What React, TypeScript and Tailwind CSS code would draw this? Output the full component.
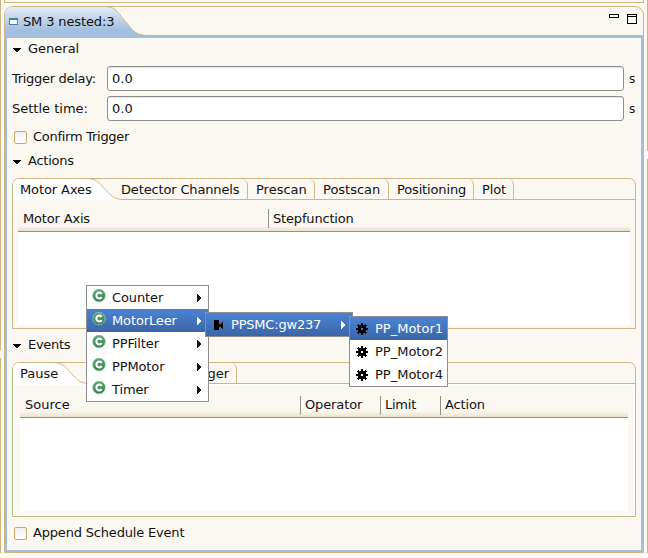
import React from "react";

const cream = "bg-[#fbf8f1]";

function Twistie({ label, className }: { label: string; className: string }) {
  return (
    <div className={`flex h-[20px] items-center pl-[6px] ${className}`}>
      <svg width="8" height="5" className="mt-[3px] mr-[7px]" shapeRendering="crispEdges">
        <path d="M0 0h8v1h-1v1h-1v1h-1v1h-2v-1h-1v-1h-1v-1h-1z" fill="#000" />
      </svg>
      <span>{label}</span>
    </div>
  );
}

function Field({ label, className, labelClass }: { label: string; className: string; labelClass: string }) {
  return (
    <div className={`flex h-[25px] items-center pl-[5px] ${className}`}>
      <span className={`w-[95px] ${labelClass}`}>{label}</span>
      <div className="flex h-[25px] w-[517px] items-center rounded-[3px] border border-[#8f8f8f] bg-white pl-[4px] shadow-[inset_0_1px_0_#e3e3e3]">
        0.0
      </div>
      <span className="ml-[5px] text-[12px]">s</span>
    </div>
  );
}

function Check({ label, className }: { label: string; className: string }) {
  return (
    <div className={`flex h-[20px] items-center pl-[7px] ${className}`}>
      <div className="mr-[6px] h-[13px] w-[13px] rounded-[2px] border border-[#c8a867] bg-linear-to-b from-[#f1f0ef] to-white" />
      <span>{label}</span>
    </div>
  );
}

function Tab({ label, className }: { label: string; className: string }) {
  return (
    <div className={`h-[21px] shrink-0 rounded-tr-[6px] border-r border-[#cdb885] leading-[21px] ${className}`}>
      {label}
    </div>
  );
}

function Column({ label, className }: { label: string; className: string }) {
  return (
    <div className={`flex h-[19px] items-center border-l ${className}`}>
      <span>{label}</span>
    </div>
  );
}

function ClassIcon({ ring }: { ring?: boolean }) {
  return (
    <svg width="14" height="14" viewBox="0 0 14 14">
      <defs>
        <linearGradient id="green" x1="0" y1="0" x2="0" y2="1">
          <stop offset="0" stopColor="#5da878" />
          <stop offset="1" stopColor="#2f8149" />
        </linearGradient>
      </defs>
      <circle cx="7" cy="6.500" r="6.2" fill="url(#green)" stroke={ring ? "#d8ecd0" : "#6fb086"} strokeWidth=".7" strokeDasharray={ring ? "2 1" : undefined} />
      <path d="M9.700 4.900A2.900 2.900 0 1 0 9.700 8.100" fill="none" stroke="#fff" strokeWidth="2.1" />
    </svg>
  );
}

function Gear() {
  return (
    <svg width="12" height="12" shapeRendering="crispEdges">
      <path
        fillRule="evenodd"
        fill="#000"
        d="M5 0h2v2h2v-1h1v1h1v1h-1v2h2v2h-2v2h1v1h-1v1h-1v-1h-2v2h-2v-2h-2v1h-1v-1h-1v-1h1v-2h-2v-2h2v-2h-1v-1h1v-1h1v1h2zM5 5v2h2v-2z"
      />
    </svg>
  );
}

function Arrow() {
  return (
    <svg width="5" height="8" shapeRendering="crispEdges">
      <path d="M0 0h1v1h1v1h1v1h1v2h-1v1h-1v1h-1v1h-1z" fill="currentColor" />
    </svg>
  );
}

const selected = "bg-linear-to-b from-[#4b84d5] to-[#3b65a7] text-white";

function ClassItem({ label, active }: { label: string; active?: boolean }) {
  return (
    <div className={`flex h-[23px] items-center pl-[5px] ${active ? selected : ""}`}>
      <div className="mb-[4px]">
        <ClassIcon ring={active} />
      </div>
      <span className="ml-[6px] w-[85px] tracking-[-0.12px]">{label}</span>
      <Arrow />
    </div>
  );
}

function MotorItem({ label, active }: { label: string; active?: boolean }) {
  return (
    <div className={`flex h-[23px] items-center pl-[6px] ${active ? selected : ""}`}>
      <Gear />
      <span className="ml-[7px]">{label}</span>
    </div>
  );
}

export default function App() {
  return (
    <div className={`relative h-[558px] w-[648px] overflow-hidden font-['DejaVu_Sans',sans-serif] text-[13px] leading-[16px] whitespace-nowrap text-[#111] ${cream}`}>
      <div className="flex h-[553px]">
        <div className="flex w-[4px] flex-col">
          <div className="h-[350px] w-px bg-[#cdb885]" />
          <div className="mt-[8px] w-px grow bg-[#cdb885]" />
        </div>

        <div className="flex w-[640px] flex-col">
          <div className="h-[3px] border-x border-b border-[#cdb885]" />
          <div className="mt-[3px] flex h-[547px] flex-col rounded-t-[9px] border border-[#cdb885]">
            <div className="relative flex h-[31px]">
              <svg width="638" height="31" className="absolute left-0 top-[-1px] overflow-visible">
                <defs>
                  <linearGradient id="tab" x1="0" y1="0" x2="0" y2="1">
                    <stop offset="0" stopColor="#e3ebf4" />
                    <stop offset=".75" stopColor="#a3bfdf" />
                    <stop offset="1" stopColor="#a3bfdf" />
                  </linearGradient>
                </defs>
                <path d="M0 32V8Q1 1 8 1H100C112 1 114 9 120 15S128 29.500 143 29.500H638V32Z" fill="url(#tab)" />
                <path d="M100 .5C112 .5 114 9 120 15S128 29.500 143 29.500H638" fill="none" stroke="#cdb885" />
                <path d="M0 30H638V32H0Z" fill="#a3bfdf" />
              </svg>
              <div className="relative flex w-full items-start">
                <svg width="9" height="7" className="ml-[4px] mt-[11px]" shapeRendering="crispEdges">
                  <rect width="9" height="7" fill="#3f83ad" />
                  <rect x="1" y="2" width="7" height="4" fill="#fff" />
                </svg>
                <span className="ml-[5px] mt-[7px] tracking-[-0.13px]">SM 3 nested:3</span>
                <svg width="30" height="12" className="ml-auto mr-[5px] mt-[6px]" shapeRendering="crispEdges">
                  <path d="M1.500 1.500h9v3h-9zM19.500 1.500h9v9h-9zM19 3.500h10" fill="none" stroke="#000" />
                </svg>
              </div>
            </div>

            <div className="flex grow flex-col border-x-2 border-b-2 border-[#a3bfdf]">
              <Twistie label="General" className="mt-px" />
              <Field label="Trigger delay:" className="mt-[7px]" labelClass="tracking-[-0.3px]" />
              <Field label="Settle time:" className="mt-[5px]" labelClass="tracking-normal" />
              <Check label="Confirm Trigger" className="mt-[6px] tracking-[-0.27px]" />
              <Twistie label="Actions" className="mt-[4px] tracking-[-0.25px]" />

              <div className="ml-[5px] mt-[7px] flex h-[151px] w-[624px] flex-col rounded-t-[7px] border border-[#cdb885]">
                <div className="relative flex h-[21px]">
                  <svg width="622" height="22" className="absolute left-0 top-[-1px] overflow-visible">
                    <path d="M0 22V6Q1 1 6 1H74C86 1 88 8 93 12.500S100 21.500 111 21.500V22Z" fill="#fff" />
                    <path d="M74 .5C86 .5 88 8 93 12.500S100 21.500 111 21.500H622" fill="none" stroke="#cdb885" />
                  </svg>
                  <div className="relative flex">
                    <Tab label="Motor Axes" className="w-[101px] border-transparent pl-[7px] tracking-[-0.1px]" />
                    <Tab label="Detector Channels" className="w-[134px] pl-[7px] tracking-[-0.15px]" />
                    <Tab label="Prescan" className="w-[67px] pl-[8px]" />
                    <Tab label="Postscan" className="w-[74px] pl-[8px]" />
                    <Tab label="Positioning" className="w-[85px] pl-[8px] tracking-[-0.15px]" />
                    <Tab label="Plot" className="w-[40px] pl-[8px] tracking-[-0.15px]" />
                  </div>
                </div>
                <div className="mx-[5px] mt-[6px] flex h-[26px] items-center border-b border-[#958f80] bg-linear-to-b from-[#fbf8f1] from-80% to-[#e9e0c9] tracking-[-0.17px]">
                  <Column label="Motor Axis" className="w-[250px] border-transparent pl-[4px]" />
                  <Column label="Stepfunction" className="border-[#8f8f8f] pl-[4px]" />
                </div>
                <div className="mx-[5px] h-[93px] bg-white" />
              </div>

              <Twistie label="Events" className="mt-[6px] tracking-[-0.3px]" />

              <div className="ml-[5px] mt-[7px] flex h-[155px] w-[624px] flex-col rounded-t-[7px] border border-[#cdb885]">
                <div className="relative flex h-[21px]">
                  <svg width="622" height="22" className="absolute left-0 top-[-1px] overflow-visible">
                    <path d="M0 22V6Q1 1 6 1H40C52 1 54 8 59 12.500S66 21.500 77 21.500V22Z" fill="#fff" />
                    <path d="M40 .5C52 .5 54 8 59 12.500S66 21.500 77 21.500H622" fill="none" stroke="#cdb885" />
                  </svg>
                  <div className="relative flex">
                    <Tab label="Pause" className="w-[66px] border-transparent pl-[7px]" />
                    <Tab label="Trigger" className="w-[158px] pr-[7px] text-right" />
                  </div>
                </div>
                <div className="flex grow flex-col border-2 border-white">
                  <div className="mx-[5px] mt-[7px] flex h-[25px] items-center border-b border-[#8f8c85] bg-linear-to-b from-[#fbf8f1] from-75% to-[#ece2ca]">
                    <Column label="Source" className="w-[280px] border-transparent pl-[4px]" />
                    <Column label="Operator" className="w-[80px] border-[#8f8f8f] pl-[4px] tracking-[-0.12px]" />
                    <Column label="Limit" className="w-[60px] border-[#8f8f8f] pl-[4px] tracking-[-0.25px]" />
                    <Column label="Action" className="border-[#8f8f8f] pl-[4px] tracking-[-0.15px]" />
                  </div>
                  <div className="mx-[5px] h-[93px] bg-white" />
                </div>
              </div>

              <Check label="Append Schedule Event" className="mt-[6px] tracking-[-0.18px]" />
            </div>
          </div>
        </div>

        <div className="ml-[3px] flex w-px flex-col">
          <div className="h-[151px] bg-[#cdb885]" />
          <div className="mt-[8px] grow bg-[#cdb885]" />
        </div>
      </div>

      <div className="absolute left-[86px] top-[285px] h-[117px] w-[123px] border border-[#8f8f8f] bg-white">
        <ClassItem label="Counter" />
        <ClassItem label="MotorLeer" active />
        <ClassItem label="PPFilter" />
        <ClassItem label="PPMotor" />
        <ClassItem label="Timer" />
      </div>
      <div className={`absolute left-[205px] top-[312px] flex h-[25px] w-[148px] items-center border border-[#8f8f8f] ${selected}`}>
        <svg width="10" height="10" className="ml-[8px]" shapeRendering="crispEdges">
          <path d="M0 0h5v4h2v-1h1v-1h1v7h-1v-1h-1v-1h-2v3h-5z" fill="#000" />
        </svg>
        <span className="ml-[7px] w-[110px] tracking-[-0.2px]">PPSMC:gw237</span>
        <Arrow />
      </div>
      <div className="absolute left-[349px] top-[316px] h-[71px] w-[99px] border border-[#8f8f8f] bg-white">
        <MotorItem label="PP_Motor1" active />
        <MotorItem label="PP_Motor2" />
        <MotorItem label="PP_Motor4" />
      </div>
    </div>
  );
}
